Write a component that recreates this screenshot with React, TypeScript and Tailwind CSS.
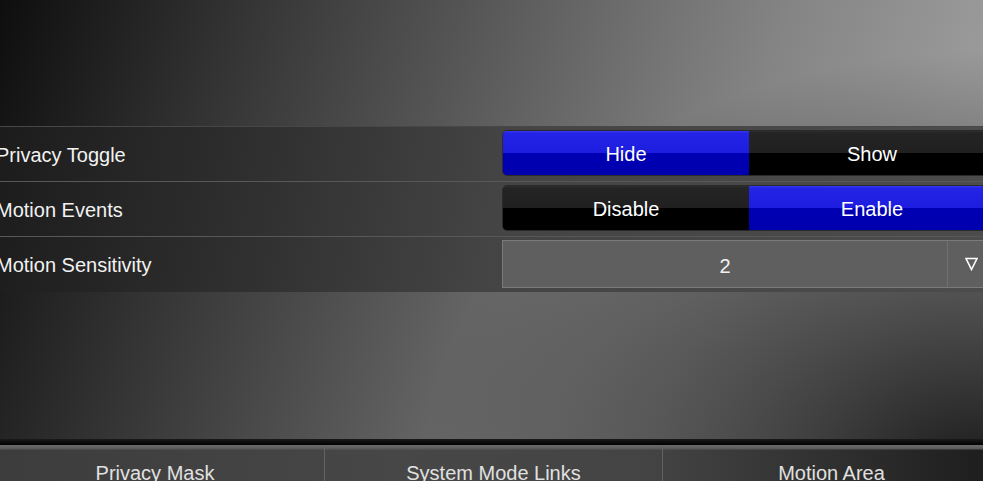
import React from "react";

const font = "font-['Liberation_Sans',Arial,Helvetica,sans-serif]";

function Segmented({ left, right, active }: { left: string; right: string; active: "left" | "right" }) {
  const on =
    "bg-[linear-gradient(to_bottom,#3a3af4_0px,#2424e6_2px,#1d1de0_50%,#0000b4_50%,#0000ae_100%)]";
  const off =
    "bg-[linear-gradient(to_bottom,#2e2e2e_0px,#242424_2px,#202020_50%,#000_50%,#000_100%)]";
  return (
    <div className="flex h-[46px] overflow-hidden rounded-[5px] border border-[#2a2a2a] text-[20px] text-white">
      <div className={`flex flex-1 items-center justify-center pt-[2px] ${active === "left" ? on : off}`}>{left}</div>
      <div className={`flex flex-1 items-center justify-center pt-[2px] ${active === "right" ? on : off}`}>{right}</div>
    </div>
  );
}

function Row({ label, children, last }: { label: string; children: React.ReactNode; last?: boolean }) {
  return (
    <div className={`flex h-[55px] items-start pt-[3px] ${last ? "" : "border-b border-[#585858]"}`}>
      <div className="flex h-[46px] flex-1 items-center pl-[10px] pt-[3px] text-[20px] text-[#f2f2f2]">{label}</div>
      <div className="mr-[4px] w-[494px]">{children}</div>
    </div>
  );
}

export default function App() {
  return (
    <div
      className={`h-[481px] w-full overflow-hidden ${font} bg-[radial-gradient(ellipse_560px_430px_at_100%_100%,rgba(0,0,0,0.85),rgba(0,0,0,0)),linear-gradient(108deg,#0e0e0e_0%,#333_21%,#585858_43%,#777_61%,#858585_70%,#989898_86%,#a0a0a0_100%)]`}
    >
      <div className="-ml-[14px] flex w-[1014px] flex-col">
        <div className="h-[126px]" />

        <div className="border-t border-[#474747] bg-[linear-gradient(100deg,#1b1b1b_0%,#2e2e2e_25%,#444_50%,#4c4c4c_100%)]">
          <Row label="Privacy Toggle">
            <Segmented left="Hide" right="Show" active="left" />
          </Row>
          <Row label="Motion Events">
            <Segmented left="Disable" right="Enable" active="right" />
          </Row>
          <Row label="Motion Sensitivity" last>
            <div className="flex h-[48px] border-[1.5px] border-[#7a7a7a] bg-[#5f5f5f] text-[20px] text-[#f2f2f2]">
              <div className="flex flex-1 items-center justify-center pt-[3px]">2</div>
              <div className="flex w-[48px] items-center justify-center border-l border-[#707070]">
                <svg width="13" height="14" viewBox="0 0 13 14">
                  <path d="M1 1.5 H12 L6.5 12.5 Z" fill="none" stroke="#fff" strokeWidth="1.6" strokeLinejoin="miter" />
                </svg>
              </div>
            </div>
          </Row>
        </div>

        <div className="h-[147px]" />

        <div className="h-[6px] bg-[linear-gradient(to_bottom,#1a1a1a,#000)]" />
        <div className="grid h-[54px] grid-cols-3 bg-[linear-gradient(to_bottom,#6c6c6c_0px,#585858_4px,rgba(0,0,0,0)_5px),linear-gradient(to_right,#3c3c3c_0%,#474747_40%,#444_65%,#2e2e2e_85%,#1c1c1c_100%)] text-[20px] text-[#e0e0e0]">
          <div className="flex items-center justify-center pt-[1px]">Privacy Mask</div>
          <div className="flex items-center justify-center border-l border-[#636363] pt-[1px]">System Mode Links</div>
          <div className="flex items-center justify-center border-l border-[#636363] pt-[1px]">Motion Area</div>
        </div>
      </div>
    </div>
  );
}
